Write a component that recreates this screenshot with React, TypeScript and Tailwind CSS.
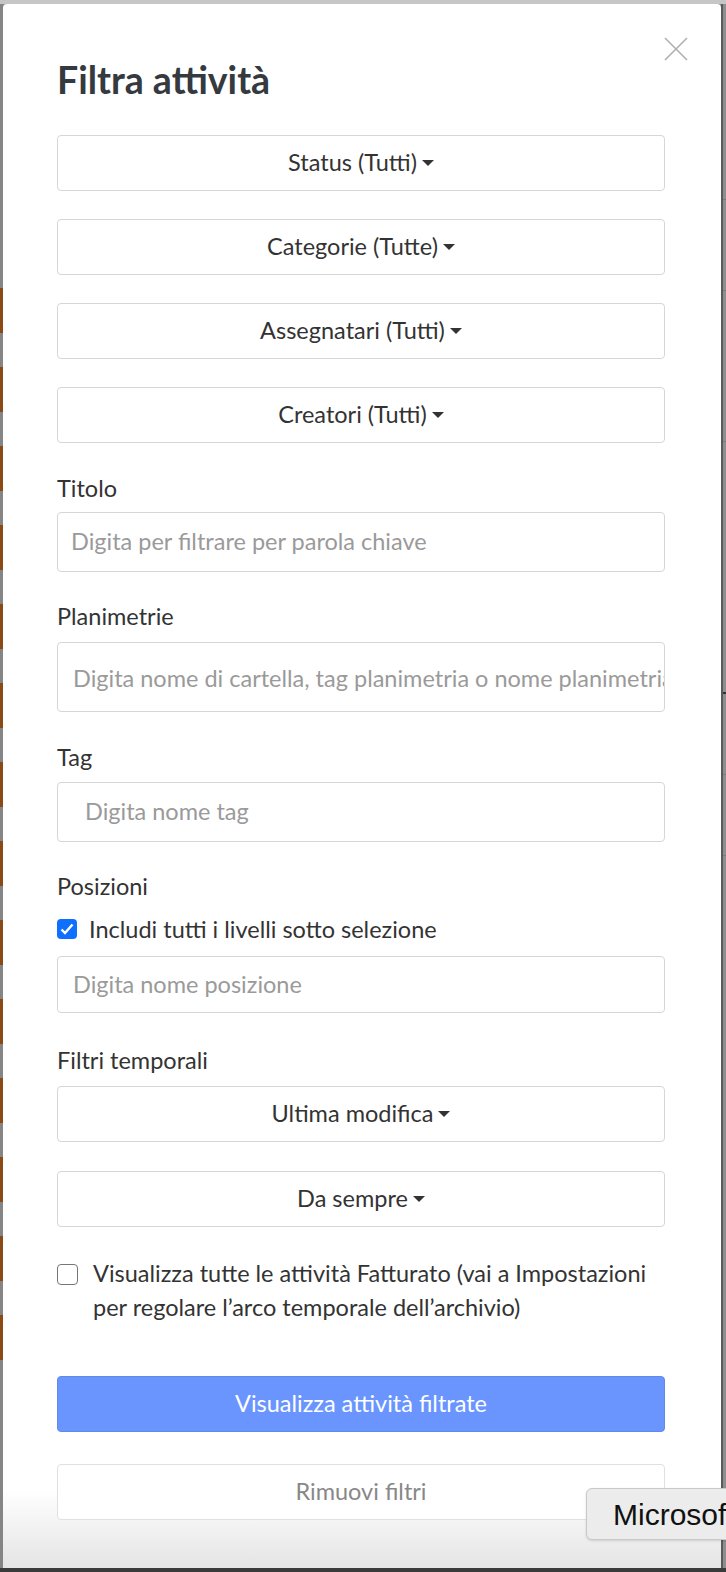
import React from "react";

const font = { fontFamily: "Lato, 'Open Sans', sans-serif" };

function Caret() {
  return (
    <svg width="12" height="6" viewBox="0 0 12 6" className="ml-[5px] inline-block">
      <path d="M0 0h12L6 6z" fill="#333" />
    </svg>
  );
}

function DropButton({ label, className = "" }: { label: string; className?: string }) {
  return (
    <button
      type="button"
      className={`flex h-[56px] w-full items-center justify-center rounded-[4px] border border-[#d6d6d6] bg-white text-[23.5px] text-[#333] ${className}`}
    >
      {label}
      <Caret />
    </button>
  );
}

function Label({ children, className = "" }: { children: React.ReactNode; className?: string }) {
  return <div className={`text-[23.5px] leading-[24px] text-[#333] ${className}`}>{children}</div>;
}

function TextBox({ placeholder, h, pl, className = "" }: { placeholder: string; h: string; pl: string; className?: string }) {
  return (
    <div
      className={`flex w-full items-center overflow-hidden whitespace-nowrap rounded-[4px] border border-[#d6d6d6] bg-white text-[23.5px] text-[#9a9a9a] ${h} ${pl} ${className}`}
    >
      {placeholder}
    </div>
  );
}

const stripes = Array.from({ length: 14 }, (_, i) => i);

export default function App() {
  return (
    <div className="relative flex h-[1572px] w-[726px] flex-col overflow-hidden bg-[#8b8b8b]" style={font}>
      <div className="h-[4px] bg-[#c6c6c6]" />
      <div className="flex h-[1564px]">
        {/* background page, left edge */}
        <div className="flex w-[3px] flex-col bg-[#858585] pt-[284px]">
          {stripes.map((i) => (
            <div key={i} className="mb-[34px] h-[45px] bg-[#8a4a16]" />
          ))}
        </div>

        {/* modal */}
        <div className="relative w-[718px] rounded-t-[4px] bg-linear-to-b from-white from-[95%] to-[#e4e4e4] pl-[54px] pr-[56px] pt-[56px]">
          <button type="button" className="absolute right-[32px] top-[32px] text-[#aaa]">
            <svg width="26" height="26" viewBox="0 0 26 26">
              <path d="M2 2l22 22M24 2L2 24" stroke="#b0b0b0" strokeWidth="1.6" />
            </svg>
          </button>

          <h1 className="text-[37.5px] font-bold leading-[40px] text-[#343a40]">Filtra attività</h1>

          <DropButton label="Status (Tutti)" className="mt-[35px]" />
          <DropButton label="Categorie (Tutte)" className="mt-[28px]" />
          <DropButton label="Assegnatari (Tutti)" className="mt-[28px]" />
          <DropButton label="Creatori (Tutti)" className="mt-[28px]" />

          <Label className="mt-[33px]">Titolo</Label>
          <TextBox placeholder="Digita per filtrare per parola chiave" h="h-[60px]" pl="pl-[13px]" className="mt-[12px]" />

          <Label className="mt-[32px]">Planimetrie</Label>
          <TextBox
            placeholder="Digita nome di cartella, tag planimetria o nome planimetria"
            h="h-[70px]"
            pl="pl-[15px]"
            className="mt-[14px] pt-[4px]"
          />

          <Label className="mt-[33px]">Tag</Label>
          <TextBox placeholder="Digita nome tag" h="h-[60px]" pl="pl-[27px]" className="mt-[13px]" />

          <Label className="mt-[32px]">Posizioni</Label>
          <div className="mt-[19px] flex items-center gap-[12px] text-[23.5px] leading-[24px] text-[#333]">
            <span className="flex h-[20px] w-[20px] items-center justify-center rounded-[4px] bg-[#0f6fff]">
              <svg width="14" height="12" viewBox="0 0 14 12">
                <path d="M1.5 6.5l3.5 3.5L12.5 1.5" fill="none" stroke="white" strokeWidth="2.4" />
              </svg>
            </span>
            Includi tutti i livelli sotto selezione
          </div>
          <TextBox placeholder="Digita nome posizione" h="h-[57px]" pl="pl-[15px]" className="mt-[15px]" />

          <Label className="mt-[35px]">Filtri temporali</Label>
          <DropButton label="Ultima modifica" className="mt-[14px] h-[55px]" />
          <DropButton label="Da sempre" className="mt-[29px] h-[55px]" />

          <div className="mt-[29px] flex items-start gap-[15px] text-[23.5px] leading-[34px] text-[#333]">
            <span className="mt-[8px] h-[21px] w-[21px] shrink-0 rounded-[4px] border-[1.5px] border-[#767676] bg-white" />
            <span>
              Visualizza tutte le attività Fatturato (vai a Impostazioni per regolare l’arco temporale dell’archivio)
            </span>
          </div>

          <button
            type="button"
            className="mt-[52px] flex h-[56px] w-full items-center justify-center rounded-[4px] border border-[#5f8ae8] bg-[#6a95ff] text-[23.5px] text-white"
          >
            Visualizza attività filtrate
          </button>
          <button
            type="button"
            className="mt-[32px] flex h-[56px] w-full items-center justify-center rounded-[4px] border border-[#e0e0e0] bg-white text-[23.5px] text-[#888]"
          >
            Rimuovi filtri
          </button>
        </div>

        {/* background page, right edge */}
        <div className="flex flex-1 flex-col border-l-2 border-[#5a5a5a] bg-[#8e8e8e]">
          <div className="mt-[195px] h-px bg-[#7a7a7a]" />
          <div className="mt-[90px] h-px bg-[#7a7a7a]" />
          <div className="mt-[150px] h-px bg-[#7a7a7a]" />
          <div className="mt-[250px] h-[2px] bg-[#333]" />
          <div className="mt-[80px] h-px bg-[#7a7a7a]" />
          <div className="mt-[80px] h-px bg-[#7a7a7a]" />
        </div>
      </div>
      <div className="h-[4px] bg-[#3a3a3a]" />

      {/* system tooltip */}
      <div
        className="absolute left-[586px] top-[1488px] flex h-[52px] w-[160px] items-center rounded-[6px] border border-[#c8c8c8] bg-[#ececec] pl-[26px] text-[30px] text-[#111] shadow-sm"
        style={{ fontFamily: "'Liberation Sans', Arial, sans-serif" }}
      >
        Microsof
      </div>
    </div>
  );
}
